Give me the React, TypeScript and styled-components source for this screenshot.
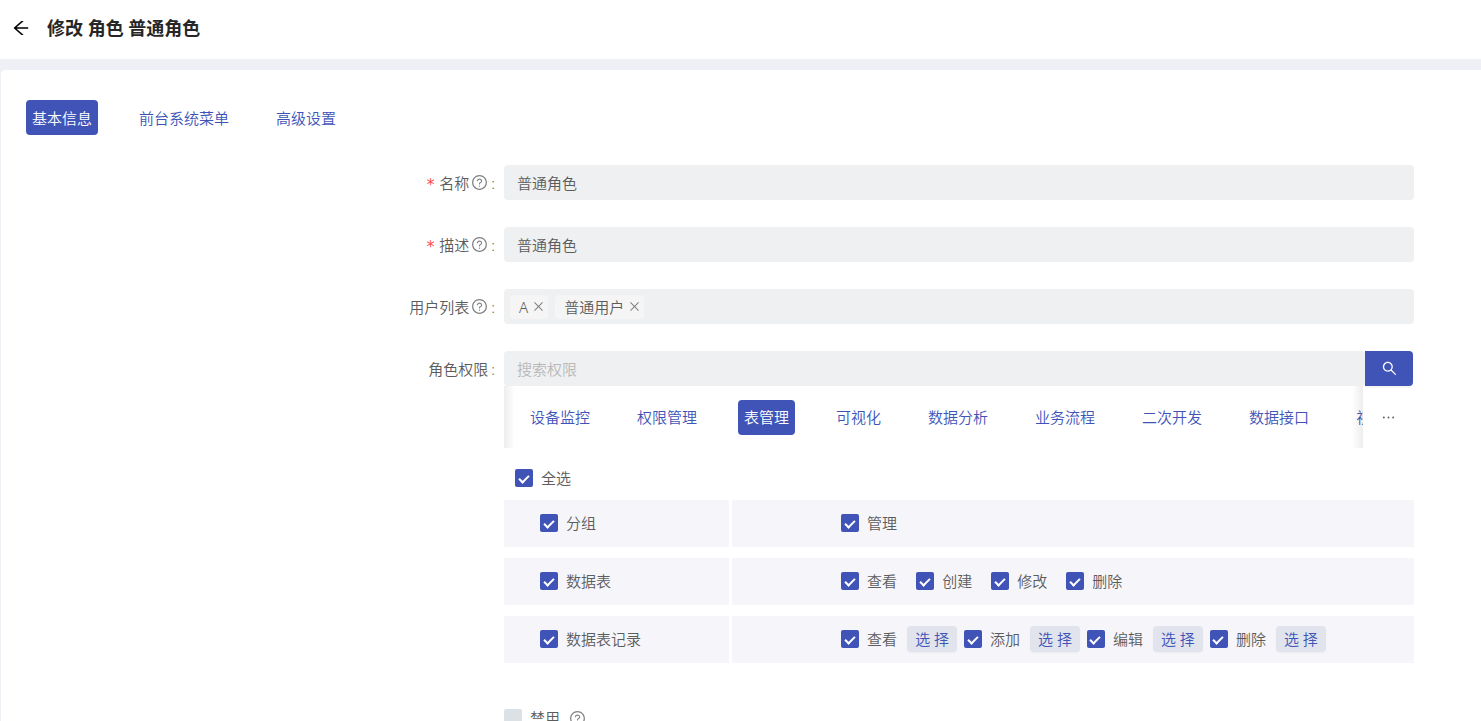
import React, { useId, useState } from "react";
import styled, { createGlobalStyle } from "styled-components";
import {
  AiOutlineArrowLeft,
  AiOutlineClose,
  AiOutlineEllipsis,
  AiOutlineQuestionCircle,
  AiOutlineSearch,
} from "react-icons/ai";

const color = {
  primary: "#4054b8",
  title: "#262626",
  text: "#5c5c5c",
  muted: "#808080",
  placeholder: "#b8b8b8",
  danger: "#ff4d4f",
  page: "#eff0f5",
  field: "#eff0f2",
  tag: "#f5f5f5",
  row: "#f5f5fa",
  soft: "#e1e4ec",
  unchecked: "#dce1e5",
};

const GlobalStyle = createGlobalStyle`
  *, *::before, *::after { box-sizing: border-box; }
  body {
    margin: 0;
    background: ${color.page};
    color: ${color.text};
    font: 350 15px/24px "Noto Sans", "Noto Sans CJK SC", sans-serif;
  }
  button, input { font: inherit; color: inherit; }
  button { border: 0; padding: 0; background: none; cursor: pointer; }
`;

const Shell = styled.div`
  display: flex;
  flex-direction: column;
  gap: 11px;
  height: 100vh;
`;

const Header = styled.header`
  display: flex;
  align-items: center;
  flex: none;
  gap: 16px;
  height: 59px;
  padding: 0 11px 3px;
  background: #fff;
`;

const BackButton = styled.button`
  display: flex;
  color: #000;
  font-size: 20px;
`;

const Title = styled.h1`
  margin: 0;
  color: ${color.title};
  font-size: 18px;
  font-weight: 600;
  line-height: 28px;
`;

const Card = styled.main`
  flex: 1;
  min-height: 0;
  margin-left: 1px;
  padding: 30px 25px;
  overflow-y: auto;
  scrollbar-width: none;
  border-radius: 4px 0 0 0;
  background: #fff;
`;

const TabList = styled.div`
  display: flex;
  flex: none;
  gap: 35px;
`;

const Tab = styled.button<{ $active?: boolean }>`
  flex: none;
  height: 35px;
  padding: 0 6px;
  border-radius: 4px;
  background: ${(p) => (p.$active ? color.primary : "transparent")};
  color: ${(p) => (p.$active ? "#fff" : color.primary)};
  white-space: nowrap;
`;

const Form = styled.form`
  display: flex;
  flex-direction: column;
  gap: 27px;
  margin-top: 30px;
`;

const FormRow = styled.div`
  display: grid;
  grid-template-columns: 478fr 910fr 42fr;
`;

const LabelCell = styled.div`
  display: flex;
  align-items: center;
  justify-content: flex-end;
  height: 35px;
  padding-right: 9px;
`;

const Required = styled.span`
  margin-right: 4px;
  padding-top: 4px;
  color: ${color.danger};
  font: 16px/20px "DejaVu Sans Mono", monospace;
`;

const HelpIcon = styled(AiOutlineQuestionCircle)`
  flex: none;
  margin-left: 2px;
  color: ${color.muted};
  font-size: 17px;
`;

const Colon = styled.span`
  margin-left: 3px;
`;

const Control = styled.div`
  min-width: 0;
  grid-column: 2;
`;

const TextInput = styled.input`
  display: block;
  width: 100%;
  min-width: 0;
  height: 35px;
  padding: 0 13px;
  border: 0;
  border-radius: 4px;
  outline: none;
  background: ${color.field};

  &::placeholder { color: ${color.placeholder}; opacity: 1; }
`;

const TagField = styled.div`
  display: flex;
  align-items: center;
  gap: 7px;
  height: 35px;
  padding: 0 6px;
  border-radius: 4px;
  background: ${color.field};
`;

const Tag = styled.span`
  display: flex;
  align-items: center;
  gap: 4px;
  height: 24px;
  padding: 0 3px 0 9px;
  border-radius: 4px;
  background: ${color.tag};
`;

const TagClose = styled.button`
  display: flex;
  color: ${color.muted};
  font-size: 13px;
`;

const SearchBar = styled.div`
  display: flex;
  padding-right: 1px;
`;

const SearchButton = styled.button`
  display: flex;
  flex: none;
  align-items: center;
  justify-content: center;
  width: 48px;
  height: 35px;
  border-radius: 0 4px 4px 0;
  background: ${color.primary};
  box-shadow: 0 2px 0 rgba(0, 0, 0, 0.04);
  color: #fff;
  font-size: 17px;
`;

const TabStrip = styled.div`
  display: flex;
  height: 62px;
`;

const TabViewport = styled.div`
  position: relative;
  display: flex;
  flex: 1;
  align-items: center;
  min-width: 0;
  padding-left: 20px;
  overflow: hidden;

  &::before,
  &::after {
    content: "";
    position: absolute;
    top: 0;
    bottom: 0;
    width: 11px;
    pointer-events: none;
  }
  &::before {
    left: 0;
    background: linear-gradient(to right, rgba(0, 0, 0, 0.07), transparent);
  }
  &::after {
    right: 0;
    background: linear-gradient(to left, rgba(0, 0, 0, 0.07), transparent);
  }
`;

const MoreButton = styled.button`
  display: flex;
  flex: none;
  align-items: center;
  justify-content: center;
  width: 51px;
  font-size: 17px;
`;

const SelectAll = styled.div`
  display: flex;
  align-items: center;
  height: 52px;
  padding: 8px 11px 0;
`;

const Permissions = styled.div`
  display: flex;
  flex-direction: column;
  gap: 11px;
`;

const PermissionRow = styled.div`
  display: grid;
  grid-template-columns: 225fr 682fr;
  gap: 3px;
`;

const PermissionCell = styled.div<{ $gap?: number }>`
  display: flex;
  align-items: center;
  gap: ${(p) => p.$gap ?? 0}px;
  min-height: 47px;
  padding: 0 0 1px 16%;
  background: ${color.row};
`;

const Action = styled.div`
  display: flex;
  align-items: center;
  gap: 10px;
`;

const CheckLabel = styled.label`
  display: flex;
  align-items: center;
  gap: 8px;
  white-space: nowrap;
  cursor: pointer;
`;

const CheckInput = styled.input`
  appearance: none;
  display: grid;
  flex: none;
  place-items: center;
  width: 18px;
  height: 18px;
  margin: 0;
  border-radius: 2px;
  background: ${color.unchecked};

  &:checked { background: ${color.primary}; }
  &:checked::after {
    content: "";
    width: 6px;
    height: 10px;
    margin: 0 1px 1px 0;
    border: solid #fff;
    border-width: 0 2px 2px 0;
    transform: rotate(45deg);
  }
`;

const ChooseButton = styled.button`
  height: 26px;
  padding: 0 8px;
  border-radius: 4px;
  background: ${color.soft};
  box-shadow: 0 1px 2px rgba(0, 0, 0, 0.04);
  color: ${color.primary};
  white-space: nowrap;
`;

const DisableRow = styled.div`
  display: flex;
  align-items: center;
  gap: 7px;
  margin-top: 16px;
`;

function Check({ label, checked = true }: { label: string; checked?: boolean }) {
  return (
    <CheckLabel>
      <CheckInput type="checkbox" defaultChecked={checked} />
      {label}
    </CheckLabel>
  );
}

type FieldProps = {
  label: string;
  required?: boolean;
  help?: boolean;
  children: (id: string) => React.ReactNode;
};

function Field({ label, required, help, children }: FieldProps) {
  const id = useId();
  return (
    <FormRow>
      <LabelCell>
        {required && <Required>*</Required>}
        <label htmlFor={id}>{label}</label>
        {help && <HelpIcon />}
        <Colon>:</Colon>
      </LabelCell>
      <Control>{children(id)}</Control>
    </FormRow>
  );
}

const pageTabs = ["基本信息", "前台系统菜单", "高级设置"];
const permissionTabs = [
  "设备监控",
  "权限管理",
  "表管理",
  "可视化",
  "数据分析",
  "业务流程",
  "二次开发",
  "数据接口",
  "视频监控",
];
const permissions = [
  { name: "分组", actions: ["管理"] },
  { name: "数据表", actions: ["查看", "创建", "修改", "删除"] },
  { name: "数据表记录", actions: ["查看", "添加", "编辑", "删除"], choose: true },
];

function Tabs({ items, initial }: { items: string[]; initial: string }) {
  const [active, setActive] = useState(initial);
  return (
    <TabList role="tablist">
      {items.map((item) => (
        <Tab
          key={item}
          type="button"
          role="tab"
          aria-selected={item === active}
          $active={item === active}
          onClick={() => setActive(item)}
        >
          {item}
        </Tab>
      ))}
    </TabList>
  );
}

export default function App() {
  const [users, setUsers] = useState(["A", "普通用户"]);

  return (
    <Shell>
      <GlobalStyle />
      <Header>
        <BackButton type="button" aria-label="返回">
          <AiOutlineArrowLeft />
        </BackButton>
        <Title>修改 角色 普通角色</Title>
      </Header>
      <Card>
        <Tabs items={pageTabs} initial="基本信息" />
        <Form onSubmit={(e) => e.preventDefault()}>
          <Field label="名称" required help>
            {(id) => <TextInput id={id} defaultValue="普通角色" />}
          </Field>
          <Field label="描述" required help>
            {(id) => <TextInput id={id} defaultValue="普通角色" />}
          </Field>
          <Field label="用户列表" help>
            {(id) => (
              <TagField id={id}>
                {users.map((user) => (
                  <Tag key={user}>
                    {user}
                    <TagClose
                      type="button"
                      aria-label={`移除 ${user}`}
                      onClick={() => setUsers(users.filter((u) => u !== user))}
                    >
                      <AiOutlineClose />
                    </TagClose>
                  </Tag>
                ))}
              </TagField>
            )}
          </Field>
          <Field label="角色权限">
            {(id) => (
              <>
                <SearchBar>
                  <TextInput id={id} placeholder="搜索权限" />
                  <SearchButton type="button" aria-label="搜索">
                    <AiOutlineSearch />
                  </SearchButton>
                </SearchBar>
                <TabStrip>
                  <TabViewport>
                    <Tabs items={permissionTabs} initial="表管理" />
                  </TabViewport>
                  <MoreButton type="button" aria-label="更多">
                    <AiOutlineEllipsis />
                  </MoreButton>
                </TabStrip>
                <SelectAll>
                  <Check label="全选" />
                </SelectAll>
                <Permissions>
                  {permissions.map(({ name, actions, choose }) => (
                    <PermissionRow key={name}>
                      <PermissionCell>
                        <Check label={name} />
                      </PermissionCell>
                      <PermissionCell $gap={choose ? 7 : 19}>
                        {actions.map((action) => (
                          <Action key={action}>
                            <Check label={action} />
                            {choose && <ChooseButton type="button">选 择</ChooseButton>}
                          </Action>
                        ))}
                      </PermissionCell>
                    </PermissionRow>
                  ))}
                </Permissions>
              </>
            )}
          </Field>
          <FormRow>
            <Control>
              <DisableRow>
                <Check label="禁用" checked={false} />
                <HelpIcon />
              </DisableRow>
            </Control>
          </FormRow>
        </Form>
      </Card>
    </Shell>
  );
}
